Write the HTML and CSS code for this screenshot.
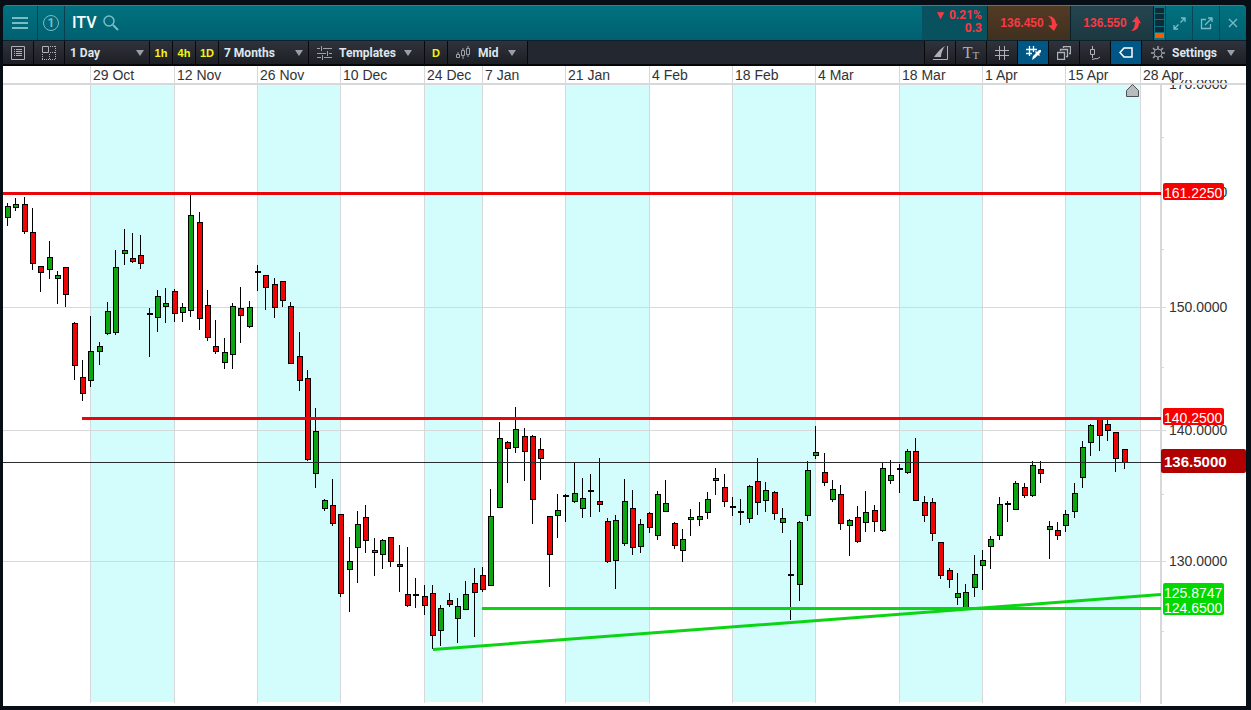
FILE: index.html
```html
<!DOCTYPE html>
<html lang="en">
<head>
  <meta charset="UTF-8">
  <meta name="viewport" content="width=device-width, initial-scale=1">
  <title>ITV</title>
  <link rel="stylesheet" href="styles.css">
</head>
<body>
  <main class="window">
    <header class="header">
      <button class="head-btn menu" aria-label="Menu">
        <svg width="16" height="12" viewBox="0 0 16 12"><path d="M0 1h16M0 6h16M0 11h16" stroke-width="2"/></svg>
      </button>
      <button class="head-btn group" aria-label="Link group 1">
        <span class="group-num">1</span>
      </button>
      <h1 class="title">ITV</h1>
      <button class="head-btn search" aria-label="Search">
        <svg width="16" height="16" viewBox="0 0 16 16"><circle cx="6" cy="6" r="5" stroke-width="1.500"/><path d="M10 10l5 5" stroke-width="2"/></svg>
      </button>
      <div class="change">
        <span>▼ 0.21%</span>
        <span>0.3</span>
      </div>
      <button class="price sell">136.450
        <svg width="10" height="15" viewBox="0 0 10 15"><path d="M0 0C5 0 8 3 8 8L10 7.500 6 15 0 9.500 4 9C4 5 3 2 0 0Z"/></svg>
      </button>
      <button class="price buy">136.550
        <svg width="10" height="15" viewBox="0 0 10 15"><path d="M0 15C5 15 8 12 8 7L10 7.500 6 0 1 6 4 6C4 10 3 13 0 15Z"/></svg>
      </button>
      <div class="depth"><i></i><i></i><i></i><i></i><i class="on"></i></div>
      <button class="head-btn win" aria-label="Maximise">
        <svg width="13" height="13" viewBox="0 0 13 13"><path d="M7.500 5.500l4-4M8 1h4v4M5.500 7.500l-4 4M1 8v4h4" stroke-width="1.300"/></svg>
      </button>
      <button class="head-btn win" aria-label="Pop out">
        <svg width="13" height="13" viewBox="0 0 13 13"><path d="M6 2.500H1.500v9h9V7M5 8l7-7M8 1h4v4" stroke-width="1.300"/></svg>
      </button>
      <button class="head-btn win" aria-label="Close">
        <svg width="10" height="10" viewBox="0 0 10 10"><path d="M1 1l8 8M9 1L1 9" stroke-width="1.300"/></svg>
      </button>
    </header>

    <nav class="toolbar">
      <button class="tool" aria-label="List">
        <svg width="14" height="14" viewBox="0 0 14 14"><path d="M.5 .5h13v13H.5zM3 3.500h1M5 3.500h6M3 5.500h1M5 5.500h6M3 7.500h1M5 7.500h6M3 9.500h1M5 9.500h6"/></svg>
      </button>
      <button class="tool" aria-label="Layout">
        <svg width="14" height="14" viewBox="0 0 14 14"><path d="M.5 .5h6v6h-6z"/><path d="M8 .5h6M13.500 0v14M0 13.500h14M.5 8v6M7.500 8v6M8 6.500h6" stroke-dasharray="1 1"/></svg>
      </button>
      <label class="drop interval">
        <select aria-label="Interval"><option>1 Day</option></select>
      </label>
      <button class="tool quick">1h</button>
      <button class="tool quick">4h</button>
      <button class="tool quick">1D</button>
      <label class="drop range">
        <select aria-label="Range"><option>7 Months</option></select>
      </label>
      <button class="drop templates">
        <svg width="15" height="14" viewBox="0 0 15 14"><path d="M0 2.500h3M6 2.500h9M0 7.500h9M12 7.500h3M0 11.500h4M7 11.500h8M4.500 0v5M10.500 5v5M5.500 9v5"/></svg>
        <span>Templates</span>
      </button>
      <button class="tool quick">D</button>
      <label class="drop mid">
        <svg width="15" height="13" viewBox="0 0 15 13"><path d="M.5 8.500h3v3h-3zM5.500 4.500h3v5h-3zM10.500 2.500h3v6h-3zM2 6v2M7 2v2M7 10v3M12 0v2M12 9v2"/></svg>
        <select aria-label="Price type"><option>Mid</option></select>
      </label>

      <div class="spacer"></div>

      <button class="tool" aria-label="Draw">
        <svg width="15" height="15" viewBox="0 0 15 15"><path d="M0 14.500h14.500V1"/><path class="solid" d="M1 12C3 9 7 4 12 1C9 5 8 9 8 12Z"/></svg>
      </button>
      <button class="tool type" aria-label="Text">T<small>T</small></button>
      <button class="tool" aria-label="Grid">
        <svg width="14" height="14" viewBox="0 0 14 14"><path d="M4.500 0v14M9.500 0v14M0 4.500h14M0 9.500h14"/></svg>
      </button>
      <button class="tool active" aria-label="Snap to grid">
        <svg width="15" height="14" viewBox="0 0 15 14"><path d="M3.500 0v10M7.500 0v6M0 3.500h11M0 7.500h6" stroke-width="1.300"/><path class="solid" d="M6 14l1-4 3-3-1-1 1-1 1 1 2-2 2 0 0 2-2 2 1 1-1 1-1-1-3 3z"/></svg>
      </button>
      <button class="tool" aria-label="Layers">
        <svg width="14" height="14" viewBox="0 0 14 14"><path d="M.5 6.500h7v7h-7zM3.500 5V3.500h7v7H9M6.500 2V.5h7v7H12" stroke-width="1.300"/></svg>
      </button>
      <button class="tool" aria-label="Candle trend">
        <svg width="12" height="14" viewBox="0 0 12 14"><path d="M1.500 3.500h4v5h-4zM3.500 0v3M3.500 9v3M3 13.500l4-1 1 .5 3-2"/></svg>
      </button>
      <button class="tool active" aria-label="Price tag">
        <svg width="14" height="11" viewBox="0 0 14 11"><path d="M5 1h8v9H5L1 5.500z" stroke-width="1.500"/></svg>
      </button>
      <button class="drop settings">
        <svg width="14" height="14" viewBox="0 0 14 14"><circle cx="7" cy="7" r="4"/><path d="M7 0v3M7 11v3M0 7h3M11 7h3M2 2l2 2M10 10l2 2M12 2l-2 2M2 12l2-2" stroke-width="1.500"/></svg>
        <span>Settings</span>
      </button>
    </nav>

    <svg class="chart" id="chart" viewBox="3 66 1243 640" role="img" aria-label="ITV daily candlestick chart">
      <defs>
        <clipPath id="plotTop"><rect x="1161" y="80" width="85" height="20"/></clipPath>
      </defs>
      <g id="bands" class="bands"></g>
      <g id="dates" class="label"></g>
      <g id="prices" class="label"></g>
      <g id="grid" class="grid"></g>
      <g id="candles"></g>

      <g class="levels">
        <path class="resistance" d="M3 193.500H1161M82 418.500H1161"/>
        <path class="support" d="M482 608.500H1161M433 649.500L1161 594.500"/>
        <path class="current" d="M3 462.500H1161"/>
      </g>
      <path class="marker" d="M1126.500 90.500l6-6 6 6v6h-12z"/>

      <g class="tags">
        <rect class="red" x="1163" y="183" width="61" height="17" rx="2"/>
        <text x="1164" y="198">161.2250</text>
        <rect class="red" x="1163" y="408" width="61" height="17" rx="2"/>
        <text x="1164" y="423">140.2500</text>
        <rect class="dark-red" x="1161" y="449" width="85" height="24" rx="2"/>
        <text class="last" x="1164" y="467">136.5000</text>
        <rect class="green" x="1163" y="583" width="61" height="32" rx="2"/>
        <text x="1164" y="598">125.8747</text>
        <text x="1164" y="613">124.6500</text>
      </g>
    </svg>
  </main>
  <script src="chart.js"></script>
</body>
</html>
```
FILE: styles.css
```css
* { box-sizing: border-box; }
body {
  margin: 0;
  padding: 5px 5px 4px 3px;
  background: #080e16;
  font-family: Roboto, "Liberation Sans", sans-serif;
  font-size: 12px;
}
button, select {
  margin: 0;
  padding: 0;
  border: 0;
  border-radius: 0;
  background: none;
  color: inherit;
  font: inherit;
  cursor: pointer;
}
svg { display: block; flex: none; }
button svg, label svg { fill: none; stroke: currentColor; }
.window { display: block; }

/* title bar */
.header {
  display: flex;
  height: 36px;
  border-top: 1px solid #2b8795;
  border-bottom: 1px solid #08222c;
  border-radius: 4px 4px 0 0;
  overflow: hidden;
  background: linear-gradient(#00727f, #005f70);
  color: #79bcc8;
}
.head-btn {
  display: flex;
  align-items: center;
  justify-content: center;
}
.menu { width: 35px; border-right: 1px solid #073f4d; }
.group { width: 27px; border-right: 1px solid #073f4d; }
.group-num {
  width: 16px;
  height: 16px;
  border: 1px solid #79bcc8;
  border-radius: 50%;
  font-size: 12px;
  font-weight: 700;
  line-height: 14px;
}
.title {
  margin: 0 6px 0 7px;
  color: #fff;
  font-size: 16px;
  font-weight: 500;
  line-height: 34px;
}
.search { margin-right: auto; }
.change {
  display: flex;
  flex-direction: column;
  width: 66px;
  padding: 3px 5px 0 0;
  border-left: 1px solid #07505f;
  border-right: 1px solid #0a2a33;
  background: #08525f;
  color: #f93a42;
  font-weight: 700;
  line-height: 13px;
  text-align: right;
}
.price {
  display: flex;
  align-items: center;
  justify-content: center;
  gap: 4px;
  width: 83px;
  border-right: 1px solid #0a2028;
  color: #f93a42;
  font-family: "Liberation Sans", sans-serif;
  font-weight: 700;
}
.price svg { fill: currentColor; stroke: none; }
.sell { background: linear-gradient(#533b25, #40301f); }
.buy { background: linear-gradient(#244650, #1c3841); }
.depth {
  display: flex;
  flex-direction: column;
  gap: 1px;
  width: 11px;
  padding: 2px 1px;
  background: #0b7080;
}
.depth i { flex: 1; background: #0c2c37; }
.depth .on { background: #f85c00; }
.win { width: 27px; border-left: 1px solid #084453; }

/* chart toolbar */
.toolbar {
  display: flex;
  height: 25px;
  border-bottom: 2px solid #050608;
  background: #232730;
  color: #dfe7ee;
  font-weight: 700;
}
.tool, .drop {
  display: flex;
  align-items: center;
  border-right: 1px solid #08090c;
  background: linear-gradient(#30333c, #1d1f25);
}
.tool {
  justify-content: center;
  width: 31px;
  color: #aeb2b8;
}
.quick {
  width: 23px;
  color: #f4f414;
  font-family: "Liberation Sans", sans-serif;
  font-size: 11px;
  font-weight: 700;
}
.tool.active { background: #005684; color: #fff; }
.tool .solid { fill: currentColor; stroke: none; }
.type {
  font-family: "Liberation Serif", serif;
  font-size: 16px;
  font-weight: 400;
}
.type small { padding-top: 4px; font-size: 11px; }
.drop { gap: 7px; padding: 0 5px; }
.drop svg { color: #9da2a9; }
.drop::after {
  content: "";
  margin-left: auto;
  border: 4px solid transparent;
  border-top: 6px solid #9a9fa6;
  border-bottom: 0;
}
.drop select {
  flex: 1;
  min-width: 0;
  appearance: none;
  outline: 0;
}
.drop option { color: #111; }
.interval { width: 85px; }
.range { width: 90px; }
.templates { width: 116px; padding: 0 12px 0 8px; }
.mid { width: 80px; padding: 0 11px 0 8px; }
.settings { width: 104px; padding: 0 11px 0 9px; border-right: 0; }
.spacer { flex: 1; border-right: 1px solid #08090c; }

/* chart */
.chart {
  width: 100%;
  height: auto;
  background: #fff;
  font-family: "Liberation Sans", sans-serif;
  font-size: 14px;
}
.bands { fill: #d3fcfd; }
.grid { fill: none; stroke: #d6d8da; }
.grid .axis { stroke-width: 2; }
.label { fill: #333; }
.wick, .doji { stroke: #000; }
.doji { stroke-width: 2; }
.up, .down { stroke: #000; }
.up { fill: #0aa50f; }
.down { fill: #f00505; }
.levels { fill: none; stroke-width: 3; }
.resistance { stroke: #e8060a; }
.support { stroke: #0bd414; }
.levels .current { stroke: #2b2e30; stroke-width: 1; }
.marker { fill: #b9bcbe; stroke: #4c4f52; }
.tags text { fill: #fff; }
.tags .last { font-size: 15px; font-weight: 700; }
.red { fill: #f80000; }
.dark-red { fill: #b00000; }
.green { fill: #00d800; }
```
FILE: chart.js
```js
const NS = 'http://www.w3.org/2000/svg';

// high, body top, body bottom, low, direction (u = up, d = down, x = doji)
const candles = [
  [203,206,218,226,'u'], [198,204,208,211,'u'], [197,204,232,234,'d'], [208,232,264,270,'d'],
  [266,266,273,292,'d'], [241,257,270,279,'u'], [271,275,279,304,'u'], [267,267,295,307,'d'],
  [322,323,366,380,'d'], [360,377,394,401,'d'], [316,351,381,387,'u'], [342,346,352,365,'u'],
  [302,311,334,335,'u'], [250,267,333,335,'u'], [229,250,254,265,'u'], [233,258,262,263,'d'],
  [235,255,264,269,'d'], [308,313,315,357,'x'], [290,296,318,332,'u'], [288,303,307,323,'u'],
  [289,291,314,322,'d'], [303,307,313,322,'u'], [194,215,311,317,'u'], [212,222,319,330,'d'],
  [290,305,338,341,'d'], [320,346,352,354,'d'], [338,352,363,369,'u'], [303,306,355,369,'u'],
  [287,308,316,343,'d'], [301,307,327,328,'u'], [265,271,273,291,'x'], [275,275,288,310,'d'],
  [278,284,308,318,'d'], [281,281,301,307,'d'], [302,306,364,364,'d'], [332,356,381,391,'d'],
  [370,378,460,461,'d'], [408,431,474,488,'u'], [499,500,509,511,'u'], [479,505,524,526,'d'],
  [514,514,594,597,'d'], [537,561,570,612,'u'], [511,524,548,583,'u'], [505,517,541,553,'d'],
  [538,550,553,576,'u'], [539,540,555,569,'u'], [537,537,562,567,'d'], [545,564,567,592,'d'],
  [547,594,606,607,'d'], [578,594,596,608,'x'], [585,596,606,615,'d'], [585,593,636,649,'d'],
  [605,608,631,646,'u'], [593,600,605,607,'d'], [598,606,619,643,'u'], [581,594,610,610,'u'],
  [568,583,593,637,'d'], [567,575,590,592,'d'], [489,516,586,586,'u'], [422,438,508,508,'u'],
  [441,442,449,483,'d'], [407,429,448,453,'u'], [428,436,452,481,'d'], [435,436,500,524,'d'],
  [438,449,459,480,'d'], [516,516,555,587,'d'], [494,510,516,538,'u'], [494,495,497,522,'x'],
  [463,493,502,503,'u'], [478,498,509,518,'u'], [474,490,492,517,'x'], [458,501,505,512,'d'],
  [518,521,562,563,'d'], [515,520,561,589,'u'], [479,501,544,546,'u'], [490,508,548,555,'d'],
  [519,524,547,553,'u'], [512,513,528,533,'d'], [491,494,536,540,'u'], [480,503,512,512,'u'],
  [522,523,546,549,'d'], [529,539,551,562,'u'], [509,517,520,536,'u'], [502,516,520,526,'u'],
  [492,499,513,519,'u'], [468,478,481,495,'u'], [474,487,502,507,'d'], [497,506,508,516,'x'],
  [499,511,513,525,'x'], [485,486,519,523,'u'], [458,481,503,515,'d'], [482,490,501,512,'u'],
  [491,492,514,520,'d'], [508,518,523,533,'u'], [540,574,576,620,'x'], [521,522,585,601,'u'],
  [461,470,516,521,'u'], [426,452,456,459,'u'], [453,472,483,486,'d'], [480,489,500,502,'u'],
  [485,494,524,530,'d'], [519,520,526,556,'u'], [506,517,542,543,'d'], [491,512,523,532,'u'],
  [505,510,522,532,'d'], [463,468,531,532,'u'], [460,475,481,484,'u'], [464,468,470,493,'x'],
  [449,451,473,474,'u'], [438,451,501,501,'d'], [496,502,516,522,'d'], [498,502,534,541,'d'],
  [542,542,576,579,'d'], [568,570,580,588,'d'], [573,593,598,605,'u'], [584,592,608,608,'u'],
  [555,574,588,597,'u'], [550,560,566,590,'u'], [536,539,547,569,'u'], [497,504,536,540,'u'],
  [501,503,505,522,'x'], [481,483,510,510,'u'], [483,487,496,498,'d'], [461,465,496,497,'u'],
  [461,469,474,483,'d'], [521,526,530,559,'u'], [522,530,536,540,'d'], [510,514,526,532,'u'],
  [483,493,512,518,'u'], [441,447,478,488,'u'], [424,425,443,456,'u'], [419,419,436,451,'d'],
  [420,424,431,441,'d'], [432,432,459,472,'d'], [449,449,463,469,'d']
];

const dates = [
  [90, '29 Oct'], [174, '12 Nov'], [257, '26 Nov'], [340, '10 Dec'], [424, '24 Dec'],
  [482, '7 Jan'], [565, '21 Jan'], [649, '4 Feb'], [732, '18 Feb'], [815, '4 Mar'],
  [899, '18 Mar'], [982, '1 Apr'], [1065, '15 Apr'], [1140, '28 Apr']
];

const prices = [[84, '170.0000'], [192, '160.0000'], [307, '150.0000'], [430, '140.0000'], [561, '130.0000']];
const minorTicks = [137, 249, 367, 494, 631];

const AXIS = 1161;
const TOP = 84;
const BOTTOM = 703;

function add(parent, name, attrs, text) {
  const el = document.createElementNS(NS, name);
  for (const key in attrs) el.setAttribute(key, attrs[key]);
  if (text) el.textContent = text;
  document.getElementById(parent).appendChild(el);
}

dates.forEach(([x, text], i) => {
  // every other period is shaded
  if (i % 2 === 0 && dates[i + 1]) {
    add('bands', 'rect', { x: x, y: TOP, width: dates[i + 1][0] - x, height: BOTTOM - TOP - 1 });
  }
  add('grid', 'path', { d: `M${x + 0.5} 66V${BOTTOM}` });
  add('dates', 'text', { x: x + 3, y: 80 }, text);
});

add('grid', 'path', { class: 'axis', d: `M3 84H1246M${AXIS} ${TOP}V${BOTTOM + 1}` });

prices.forEach(([y, text], i) => {
  if (i > 1) add('grid', 'path', { d: `M3 ${y + 0.5}H${AXIS + 5}` });
  const attrs = { x: 1169, y: y + 5 };
  if (i === 0) attrs['clip-path'] = 'url(#plotTop)';
  add('prices', 'text', attrs, text);
});

minorTicks.forEach(y => add('grid', 'path', { d: `M${AXIS} ${y + 0.5}h3` }));

candles.forEach(([high, top, bottom, low, dir], i) => {
  const x = 7 + Math.floor((i * 25 + 1) / 3);
  add('candles', 'path', { class: 'wick', d: `M${x + 0.5} ${high}V${low}` });
  if (dir === 'x') {
    add('candles', 'path', { class: 'doji', d: `M${x - 2} ${top + 1}h6` });
  } else {
    add('candles', 'rect', {
      class: dir === 'u' ? 'up' : 'down',
      x: x - 1.5, y: top + 0.5, width: 5, height: bottom - top - 1
    });
  }
});
```
